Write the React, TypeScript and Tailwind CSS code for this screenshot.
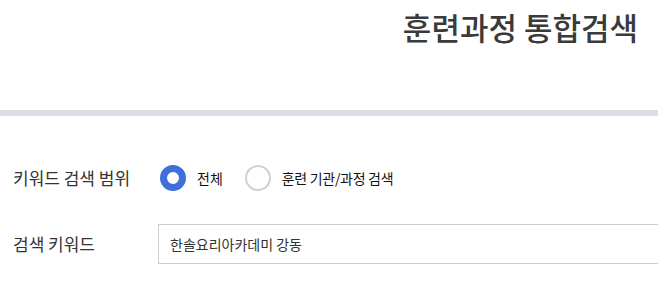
import React from "react";

export default function App() {
  return (
    <div className="w-[658px] h-[286px] overflow-hidden bg-white" style={{ fontFamily: '"Noto Sans CJK KR", "Noto Sans", sans-serif' }}>
      <div className="h-[110px] flex justify-end pr-[20px] pt-[7px]">
        <h1 className="text-[31px] leading-[40px] text-[#3a3a3a] font-medium">훈련과정 통합검색</h1>
      </div>
      <div className="h-[6px] bg-[#d9dee7]" />
      <div className="pl-[13px]">
        <div className="flex items-center h-[26px] mt-[49px]">
          <div className="w-[147px] text-[17px] text-[#333]">키워드 검색 범위</div>
          <label className="flex items-center">
            <span className="w-[26px] h-[26px] rounded-full border-[7px] border-[#3f6fd8] bg-white" />
            <span className="ml-[11px] text-[14px] text-[#111]">전체</span>
          </label>
          <label className="flex items-center ml-[22px]">
            <span className="w-[26px] h-[26px] rounded-full border-[2px] border-[#d0d0d0] bg-white" />
            <span className="ml-[11px] text-[14px] text-[#111] tracking-[-0.3px]">훈련 기관/과정 검색</span>
          </label>
        </div>
        <div className="flex items-center mt-[33px]">
          <div className="w-[145px] text-[17px] text-[#333]">검색 키워드</div>
          <div className="flex-1 h-[40px] border border-[#cccccc] border-r-0 flex items-center pl-[11px] text-[14px] text-[#333]">
            한솔요리아카데미 강동
          </div>
        </div>
      </div>
    </div>
  );
}
